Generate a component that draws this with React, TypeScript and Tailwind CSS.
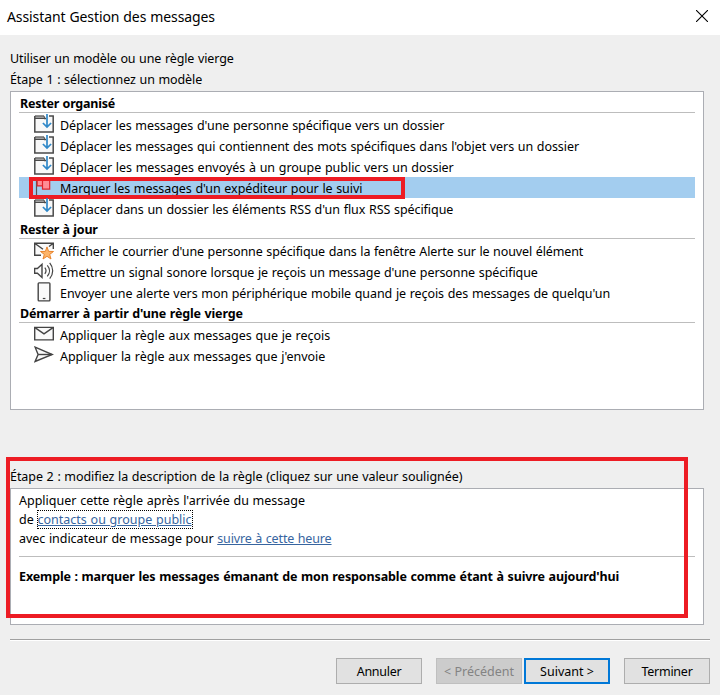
import React from "react";
import clsx from "clsx";

type IconProps = { className?: string };

const FolderMoveIcon: React.FC<IconProps> = ({ className }) => (
  <svg className={className} width="20" height="20" viewBox="0 0 20 20" fill="none">
    <path d="M1 2h18v16H1z" fill="#f8f8f8" />
    <path d="M.8 2v16.100h18.400V2M15 2h4.900M10 4.500h2" stroke="#4a4a4a" strokeWidth="1.500" />
    <path d="M1 1.900h9l.6 2.600H1z" fill="#a0a0a0" stroke="#4a4a4a" />
    <path d="M13 0v13M8.900 9l4.100 4.100L17.100 9" stroke="#2f88c8" strokeWidth="1.700" />
  </svg>
);

const FlagIcon: React.FC<IconProps> = ({ className }) => (
  <svg className={className} width="20" height="20" viewBox="0 0 20 20" fill="none">
    <path d="M2.500 2v18" stroke="#555" strokeWidth="1.200" />
    <path d="M8.500 2.500h7.200v9.600H8.500zM3.200 2.500h5.300v6.400H3.200z" fill="#ff8e96" stroke="#e0242c" strokeWidth="1.200" />
  </svg>
);

const StarMailIcon: React.FC<IconProps> = ({ className }) => (
  <svg className={className} width="20" height="20" viewBox="0 0 20 20" fill="none">
    <path d="M.7 3.300h18.600v12H.7z" fill="#fafafa" />
    <path d="M7 15.200H.7V3.300h18.600V9M1 3.500l8 5.800M19 3.500l-4 3" stroke="#444" strokeWidth="1.400" />
    <path
      d="M13 6.900l1.600 4.500 4.900.1-3.800 2.900 1.300 4.600-4-2.700L9 19l1.300-4.600-3.800-2.900 4.900-.1z"
      fill="#fdb469"
      stroke="#e8842c"
    />
  </svg>
);

const SoundIcon: React.FC<IconProps> = ({ className }) => (
  <svg className={className} width="20" height="20" viewBox="0 0 20 20" fill="none" stroke="#444">
    <path d="M.6 7.500h2.800l4.600-4.200v13.200l-4.600-4.200H.6z" fill="#fafafa" strokeWidth="1.400" />
    <path
      d="M10.800 6.700c1.500 1.900 1.500 4.300 0 6.200M13.300 4.300c2.900 3.300 2.900 7.700 0 11M15.700 1.900c4 4.800 4 11 0 15.800"
      strokeWidth="1.200"
    />
  </svg>
);

const PhoneIcon: React.FC<IconProps> = ({ className }) => (
  <svg className={className} width="20" height="20" viewBox="0 0 20 20" fill="none">
    <rect x="4.200" y=".9" width="11.700" height="18" rx=".8" fill="#fafafa" stroke="#444" strokeWidth="1.400" />
    <path d="M8.800 16.500h2.600" stroke="#444" strokeWidth="1.200" />
  </svg>
);

const MailIcon: React.FC<IconProps> = ({ className }) => (
  <svg className={className} width="20" height="20" viewBox="0 0 20 20" fill="none" stroke="#444" strokeWidth="1.400">
    <path d="M.7 3.400h18.600v12.500H.7z" fill="#fafafa" />
    <path d="M1 3.600l9 6.200 9-6.200" />
  </svg>
);

const SendIcon: React.FC<IconProps> = ({ className }) => (
  <svg className={className} width="20" height="20" viewBox="0 0 20 20" fill="none" stroke="#444" strokeWidth="1.400">
    <path d="M1.100 2.200L18.300 9.500 1.100 16.500l3-7z" fill="#fafafa" />
    <path d="M4.100 9.500h14" />
  </svg>
);

type Item = {
  label: string;
  icon: React.FC<IconProps>;
  spacing: string;
  selected?: boolean;
};

const groups: { title: string; spacing: string; items: Item[] }[] = [
  {
    title: "Rester organisé",
    spacing: "tracking-[-0.23px]",
    items: [
      {
        label: "Déplacer les messages d'une personne spécifique vers un dossier",
        icon: FolderMoveIcon,
        spacing: "tracking-[-0.06px]",
      },
      {
        label: "Déplacer les messages qui contiennent des mots spécifiques dans l'objet vers un dossier",
        icon: FolderMoveIcon,
        spacing: "tracking-[-0.06px]",
      },
      {
        label: "Déplacer les messages envoyés à un groupe public vers un dossier",
        icon: FolderMoveIcon,
        spacing: "tracking-[-0.03px]",
      },
      {
        label: "Marquer les messages d'un expéditeur pour le suivi",
        icon: FlagIcon,
        spacing: "tracking-[-0.07px]",
        selected: true,
      },
      {
        label: "Déplacer dans un dossier les éléments RSS d'un flux RSS spécifique",
        icon: FolderMoveIcon,
        spacing: "tracking-[-0.06px]",
      },
    ],
  },
  {
    title: "Rester à jour",
    spacing: "tracking-[-0.23px]",
    items: [
      {
        label: "Afficher le courrier d'une personne spécifique dans la fenêtre Alerte sur le nouvel élément",
        icon: StarMailIcon,
        spacing: "tracking-[-0.115px]",
      },
      {
        label: "Émettre un signal sonore lorsque je reçois un message d'une personne spécifique",
        icon: SoundIcon,
        spacing: "tracking-[-0.09px]",
      },
      {
        label: "Envoyer une alerte vers mon périphérique mobile quand je reçois des messages de quelqu'un",
        icon: PhoneIcon,
        spacing: "tracking-[-0.07px]",
      },
    ],
  },
  {
    title: "Démarrer à partir d'une règle vierge",
    spacing: "tracking-[-0.14px]",
    items: [
      { label: "Appliquer la règle aux messages que je reçois", icon: MailIcon, spacing: "tracking-[-0.02px]" },
      { label: "Appliquer la règle aux messages que j'envoie", icon: SendIcon, spacing: "tracking-[-0.03px]" },
    ],
  },
];

const TemplateRow: React.FC<{ item: Item }> = ({ item }) => {
  const Icon = item.icon;
  return (
    <li className={clsx("relative flex h-[21px] items-start pl-[15px]", item.selected && "bg-[#a3cdef]")}>
      <Icon className="shrink-0" />
      <span className={clsx("ml-1.5 leading-[23px]", item.spacing)}>{item.label}</span>
      {item.selected && (
        <span className="absolute top-0 left-2.5 h-[22px] w-[376px] border-4 border-[#ed1c24]" />
      )}
    </li>
  );
};

const DialogButton: React.FC<{ label: string; className: string; disabled?: boolean }> = ({
  label,
  className,
  disabled,
}) => (
  <button type="button" disabled={disabled} className={clsx("h-[26px] w-[86px]", className)}>
    {label}
  </button>
);

export default function App() {
  return (
    <div className="flex h-[695px] w-[720px] flex-col overflow-hidden bg-[#efefef] font-['Noto_Sans',sans-serif] text-[12.5px] leading-[19px] whitespace-nowrap text-black [word-spacing:0.5px]">
      <header className="flex h-[35px] shrink-0 items-center justify-between bg-white pr-3 pl-[7px]">
        <h1 className="mb-0.5 text-[14px] tracking-[-0.1px]">Assistant Gestion des messages</h1>
        <svg width="12" height="12" viewBox="0 0 12 12" className="mb-[3px]" stroke="#000" strokeWidth="1.100">
          <path d="M0 0l12 12M12 0L0 12" />
        </svg>
      </header>

      <p className="mt-[14px] ml-2.5 tracking-[-0.11px]">Utiliser un modèle ou une règle vierge</p>
      <p className="mt-0.5 ml-2.5 tracking-[-0.09px]">Étape 1 : sélectionnez un modèle</p>

      <section className="mt-0.5 ml-2.5 h-[319px] w-[694px] shrink-0 border border-[#abadb3] bg-white px-2 pt-px">
        {groups.map((group) => (
          <div key={group.title}>
            <div className="flex h-[21px] flex-col">
              <h2 className={clsx("h-[19px] pl-px leading-[21px] font-bold", group.spacing)}>{group.title}</h2>
              <div className="h-px bg-[#bdbdbd]" />
            </div>
            <ul>
              {group.items.map((item) => (
                <TemplateRow key={item.label} item={item} />
              ))}
            </ul>
          </div>
        ))}
      </section>

      <div className="relative mt-[57px] ml-2.5 w-[694px]">
        <p className="tracking-[-0.06px]">
          Étape 2 : modifiez la description de la règle (cliquez sur une valeur soulignée)
        </p>
        <section className="mt-0.5 h-[137px] border border-[#abadb3] bg-white px-2 pt-0.5">
          <p>Appliquer cette règle après l'arrivée du message</p>
          <p>
            de{" "}
            <a className="text-[#3765a0] underline outline-1 outline-black outline-dotted">
              contacts ou groupe public
            </a>
          </p>
          <p className="tracking-[-0.05px]">
            avec indicateur de message pour{" "}
            <a className="tracking-[-0.14px] text-[#3765a0] underline">suivre à cette heure</a>
          </p>
          <div className="mt-[8px] mb-2.5 h-px bg-[#bdbdbd]" />
          <p className="font-bold tracking-[-0.12px]">
            Exemple : marquer les messages émanant de mon responsable comme étant à suivre aujourd'hui
          </p>
        </section>
        <div className="absolute -top-2.5 -left-1 h-[161px] w-[682px] border-4 border-[#ed1c24]" />
      </div>

      <footer className="mt-[14px] mr-2.5 ml-2.5 flex justify-end border-t border-[#a0a0a0] pt-[18px] shadow-[inset_0_1px_0_#fff]">
        <DialogButton label="Annuler" className="border border-[#adadad] bg-[#e1e1e1] tracking-[-0.28px]" />
        <DialogButton
          label="< Précédent"
          disabled
          className="ml-[14px] border border-[#bfbfbf] bg-[#cccccc] text-[#838383]"
        />
        <DialogButton label="Suivant >" className="ml-0.5 border-2 border-[#0078d7] bg-[#e1e1e1]" />
        <DialogButton label="Terminer" className="ml-[14px] border border-[#adadad] bg-[#e1e1e1] tracking-[-0.25px]" />
      </footer>
    </div>
  );
}
